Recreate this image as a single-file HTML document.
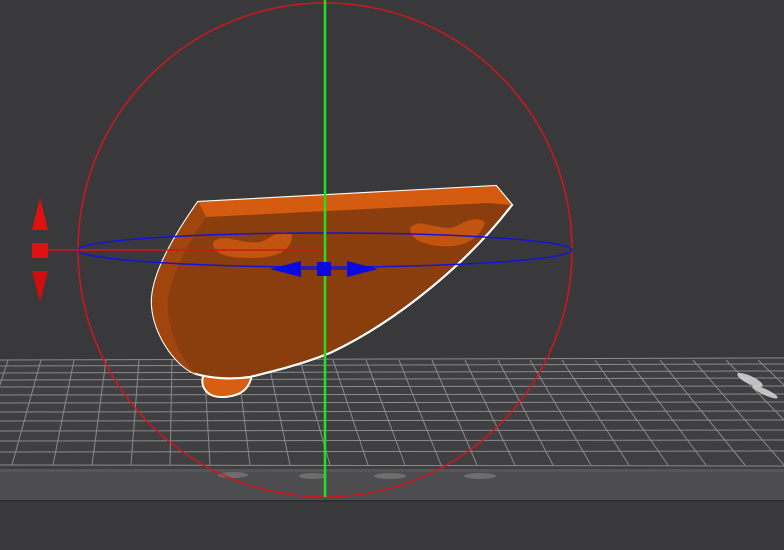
<!DOCTYPE html>
<html><head><style>html,body{margin:0;padding:0;background:#3a3a3c;}svg{display:block}</style></head><body>
<svg width="784" height="550" viewBox="0 0 784 550" xmlns="http://www.w3.org/2000/svg">
<rect width="784" height="550" fill="#39393b"/>
<polygon points="0,360 784,358 784,470 0,470" fill="#3f3f41"/>
<rect x="0" y="470" width="784" height="30" fill="#4d4d4f"/>
<rect x="0" y="469" width="784" height="3" fill="#565658"/>
<rect x="0" y="500" width="784" height="2" fill="#2e2e30"/>
<g stroke="#8a8a8c" stroke-width="1" fill="none">
<line x1="0" y1="360" x2="784" y2="358"/><line x1="0" y1="366" x2="784" y2="364"/><line x1="0" y1="373" x2="784" y2="371"/><line x1="0" y1="380" x2="784" y2="378"/><line x1="0" y1="387" x2="784" y2="386"/><line x1="0" y1="395" x2="784" y2="394"/><line x1="0" y1="403" x2="784" y2="402"/><line x1="0" y1="412" x2="784" y2="411"/><line x1="0" y1="421" x2="784" y2="420"/><line x1="0" y1="431" x2="784" y2="430"/><line x1="0" y1="441" x2="784" y2="440"/><line x1="0" y1="452" x2="784" y2="451"/><line x1="0" y1="465" x2="784" y2="466"/>
<line x1="8" y1="360" x2="0" y2="385"/><line x1="41" y1="360" x2="12" y2="465"/><line x1="74" y1="360" x2="53" y2="465"/><line x1="106" y1="360" x2="92" y2="465"/><line x1="139" y1="360" x2="131" y2="465"/><line x1="172" y1="360" x2="170" y2="465"/><line x1="204" y1="360" x2="210" y2="465"/><line x1="237" y1="360" x2="250" y2="465"/><line x1="268" y1="360" x2="290" y2="465"/><line x1="300" y1="360" x2="330" y2="465"/><line x1="333" y1="360" x2="368" y2="465"/><line x1="366" y1="360" x2="405" y2="465"/><line x1="399" y1="360" x2="441" y2="465"/><line x1="432" y1="360" x2="477" y2="465"/><line x1="465" y1="360" x2="515" y2="465"/><line x1="498" y1="360" x2="553" y2="465"/><line x1="530" y1="360" x2="591" y2="465"/><line x1="562" y1="360" x2="629" y2="465"/><line x1="595" y1="360" x2="668" y2="465"/><line x1="628" y1="360" x2="706" y2="465"/><line x1="660" y1="360" x2="745" y2="465"/><line x1="693" y1="360" x2="784" y2="465"/><line x1="726" y1="360" x2="784" y2="420"/><line x1="758" y1="360" x2="784" y2="385"/>
</g>
<g fill="#d8d8d8" opacity="0.85"><ellipse cx="750" cy="380" rx="14" ry="4" transform="rotate(25 750 380)"/><ellipse cx="765" cy="392" rx="14" ry="3" transform="rotate(25 765 392)"/></g>
<g fill="#777" opacity="0.8"><ellipse cx="233" cy="475" rx="15" ry="3"/><ellipse cx="313" cy="476" rx="14" ry="3"/><ellipse cx="390" cy="476" rx="16" ry="3"/><ellipse cx="480" cy="476" rx="16" ry="3"/></g>
<path d="M205,372 C198,384 205,398 224,397 C242,396 250,388 252,374 Z" fill="#d85e12" stroke="#fff" stroke-width="2"/>
<path d="M198,202 L496,186 L512,205 C470,260 400,320 330,353 C300,365 270,372 250,377 C230,380 210,378 196,374 C175,366 150,330 152,298 C154,270 175,235 198,202 Z" fill="#8a3d0d" stroke="#fff" stroke-width="2.2"/>
<path d="M198,202 L496,186 L512,205 L488,203 L206,217 Z" fill="#d55b11"/>
<path d="M198,202 L206,217 C180,255 165,290 168,312 C172,340 182,360 196,374 C175,366 150,330 152,298 C154,270 175,235 198,202 Z" fill="#a0450e"/>
<path d="M213,242 C225,232 240,245 260,242 C270,240 280,226 292,235 C292,252 275,258 250,258 C230,258 212,255 213,242 Z" fill="#c3540f"/>
<path d="M410,228 C420,218 430,228 450,228 C462,226 470,214 485,222 C480,240 462,248 440,246 C425,245 410,240 410,228 Z" fill="#c3540f"/>
<circle cx="325" cy="250" r="247" fill="none" stroke="#d0161c" stroke-width="1.5"/>
<ellipse cx="325" cy="250" rx="247" ry="17" fill="none" stroke="#1414d8" stroke-width="1.5"/>
<line x1="48" y1="250" x2="325" y2="250" stroke="#d0161c" stroke-width="1.5"/>
<rect x="32" y="243" width="16" height="15" fill="#e01010"/>
<polygon points="40,198 48,230 32,230" fill="#e01010"/>
<polygon points="32,271 48,271 40,302" fill="#d00e0e"/>
<line x1="325" y1="0" x2="325" y2="497" stroke="#22e022" stroke-width="2.5"/>
<line x1="300" y1="269" x2="350" y2="269" stroke="#1414d8" stroke-width="1.5"/>
<rect x="317" y="262" width="14" height="14" fill="#0a0ae0"/>
<polygon points="270,269 301,261 301,277" fill="#0a0ae0"/>
<polygon points="378,269 347,261 347,277" fill="#0a0ae0"/>
</svg>
</body></html>
